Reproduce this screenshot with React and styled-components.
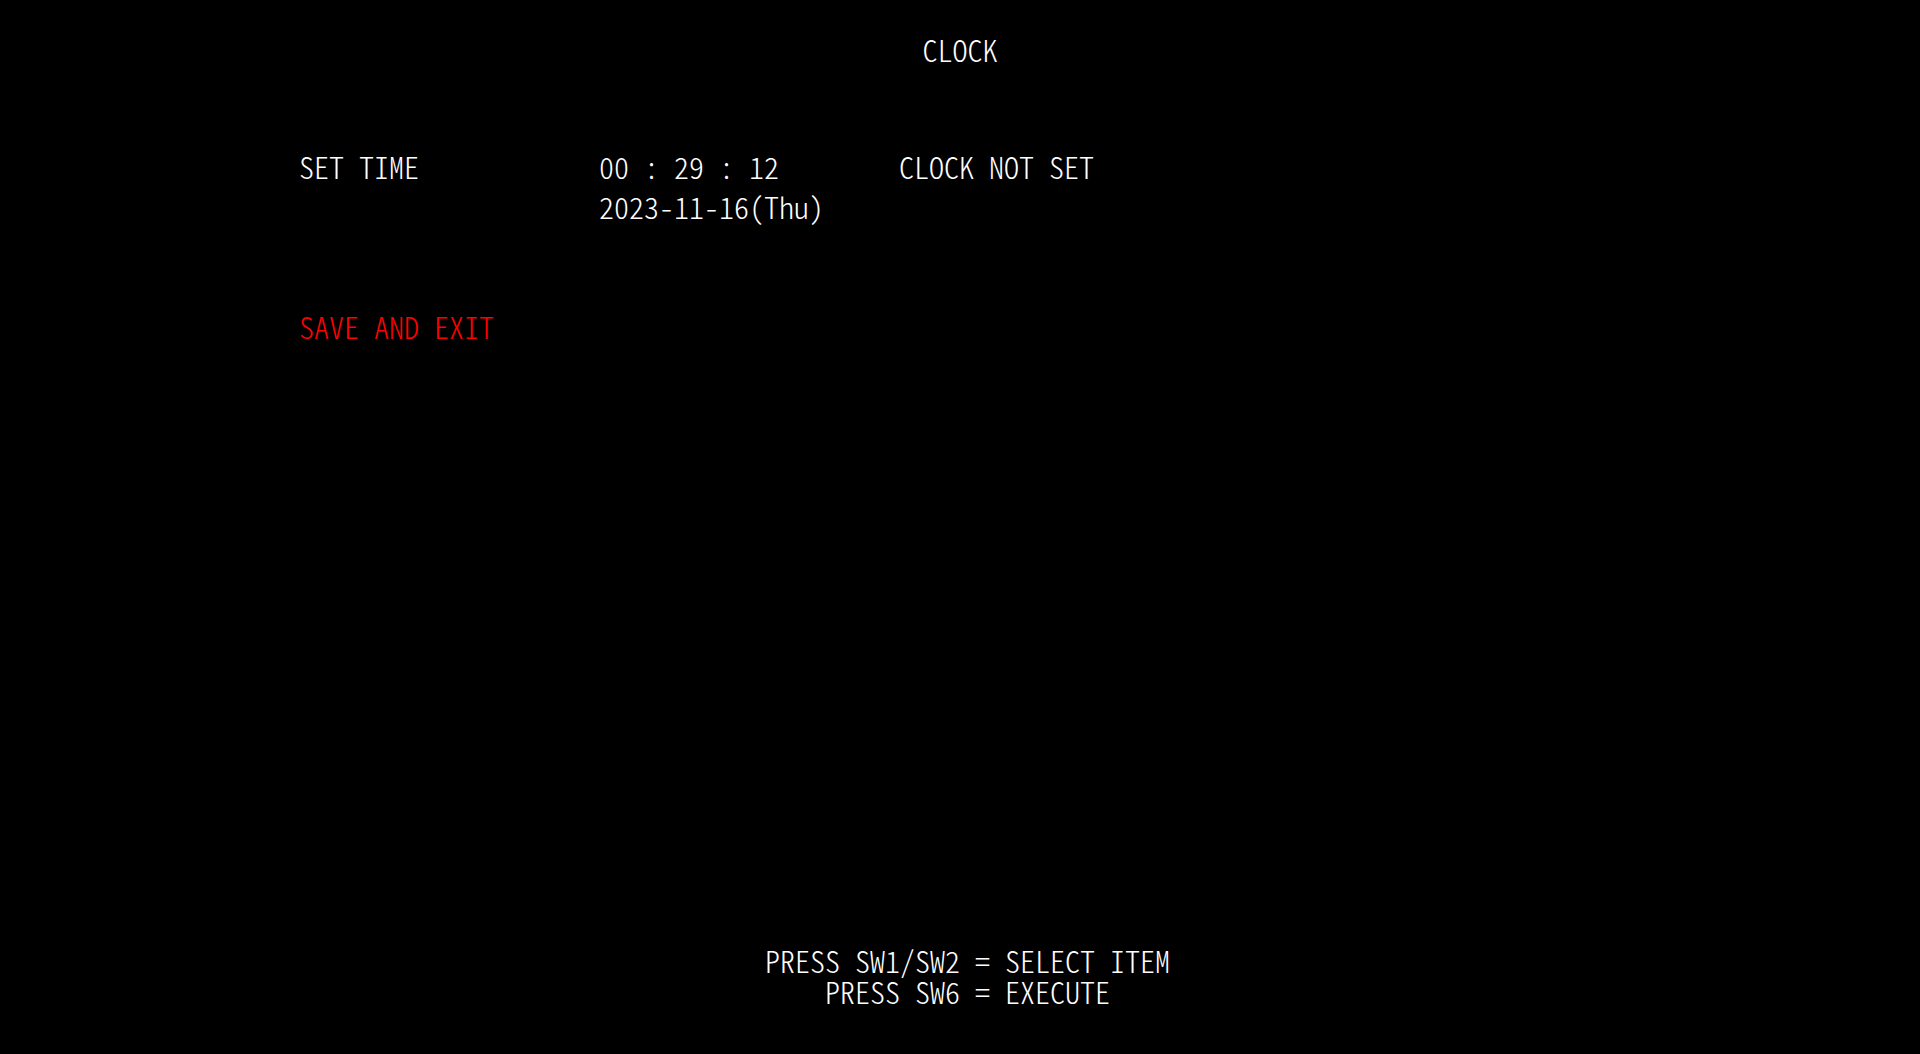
import React from "react";
import styled, { createGlobalStyle } from "styled-components";

const GlobalStyle = createGlobalStyle`
  html, body {
    margin: 0;
    padding: 0;
    background: #000;
  }
  * { box-sizing: border-box; }
`;

const Screen = styled.div`
  min-height: 100vh;
  background: #000;
  color: #fff;
  font-family: "Noto Sans CJK JP", "DejaVu Sans Mono", monospace;
  font-feature-settings: "hwid" 1;
  font-weight: 300;
  font-size: 30px;
  display: flex;
  flex-direction: column;
  padding: 29px 0 47px;
  white-space: pre;
`;

const Title = styled.div`
  text-align: center;
  line-height: 40px;
`;

const Settings = styled.div`
  display: grid;
  grid-template-columns: 300px 300px auto;
  grid-auto-rows: 40px;
  line-height: 40px;
  padding-left: 299px;
  margin-top: 77px;
`;

const Cell = styled.div`
  grid-column: ${(p) => p.$col};
  color: ${(p) => p.$color || "#fff"};
`;

const Action = styled.div`
  margin-top: 80px;
  padding-left: 299px;
  line-height: 40px;
  color: ${(p) => (p.$selected ? "#ff0000" : "#fff")};
`;

const Footer = styled.div`
  margin-top: auto;
  text-align: center;
  padding-left: 15px;
  line-height: 31px;
`;

export default function App() {
  return (
    <>
      <GlobalStyle />
      <Screen>
        <Title>CLOCK</Title>
        <Settings>
          <Cell $col={1}>SET TIME</Cell>
          <Cell $col={2}>00 : 29 : 12</Cell>
          <Cell $col={3}>CLOCK NOT SET</Cell>
          <Cell $col={2}>2023-11-16(Thu)</Cell>
        </Settings>
        <Action $selected>SAVE AND EXIT</Action>
        <Footer>{"PRESS SW1/SW2 = SELECT ITEM\nPRESS SW6 = EXECUTE"}</Footer>
      </Screen>
    </>
  );
}
